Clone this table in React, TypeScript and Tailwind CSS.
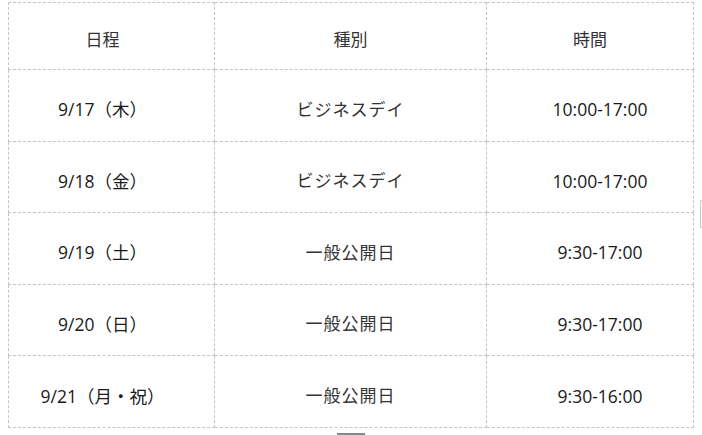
import React from "react";

const rows = [
  { d: "9/17（木）", t: "ビジネスデイ", h: "10:00-17:00" },
  { d: "9/18（金）", t: "ビジネスデイ", h: "10:00-17:00" },
  { d: "9/19（土）", t: "一般公開日", h: "9:30-17:00" },
  { d: "9/20（日）", t: "一般公開日", h: "9:30-17:00" },
  { d: "9/21（月・祝）", t: "一般公開日", h: "9:30-16:00" },
];

export default function App() {
  return (
    <div
      className="relative w-[702px] h-[435px] bg-white overflow-hidden text-[#1a1a1a]"
      style={{ fontFamily: '"Open Sans", "Noto Sans CJK JP", sans-serif' }}
    >
      <div className="pl-[8px] pt-[2px]">
        <table className="w-[685px] border-collapse table-fixed text-[17px]">
          <colgroup>
            <col className="w-[206px]" />
            <col className="w-[272px]" />
            <col className="w-[207px]" />
          </colgroup>
          <thead>
            <tr className="h-[67px]">
              <th className="border border-dashed border-[#c4c4c4] font-normal text-center pr-[18px] pt-[8px] text-[#333]">日程</th>
              <th className="border border-dashed border-[#c4c4c4] font-normal text-center pt-[8px] text-[#333]">種別</th>
              <th className="border border-dashed border-[#c4c4c4] font-normal text-center pt-[8px] text-[#333]">時間</th>
            </tr>
          </thead>
          <tbody>
            {rows.map((r, i) => (
              <tr key={i} className="h-[71.6px]">
                <td className="border border-dashed border-[#c4c4c4] text-center pr-[18px] pt-[8px] text-[17.5px]">{r.d}</td>
                <td className="border border-dashed border-[#c4c4c4] text-center pt-[8px] tracking-[1px] text-[#333]">{r.t}</td>
                <td className="border border-dashed border-[#c4c4c4] text-center pl-[20px] pt-[8px] text-[17.5px]">{r.h}</td>
              </tr>
            ))}
          </tbody>
        </table>
      </div>
      <div className="absolute left-[700px] top-[200px] w-[2px] h-[28px] border-l border-t border-b border-[#c8c8c8] rounded-l-[2px]" />
      <div className="absolute left-[337px] top-[433px] w-[28px] h-[2px] bg-[#888]" />
    </div>
  );
}
